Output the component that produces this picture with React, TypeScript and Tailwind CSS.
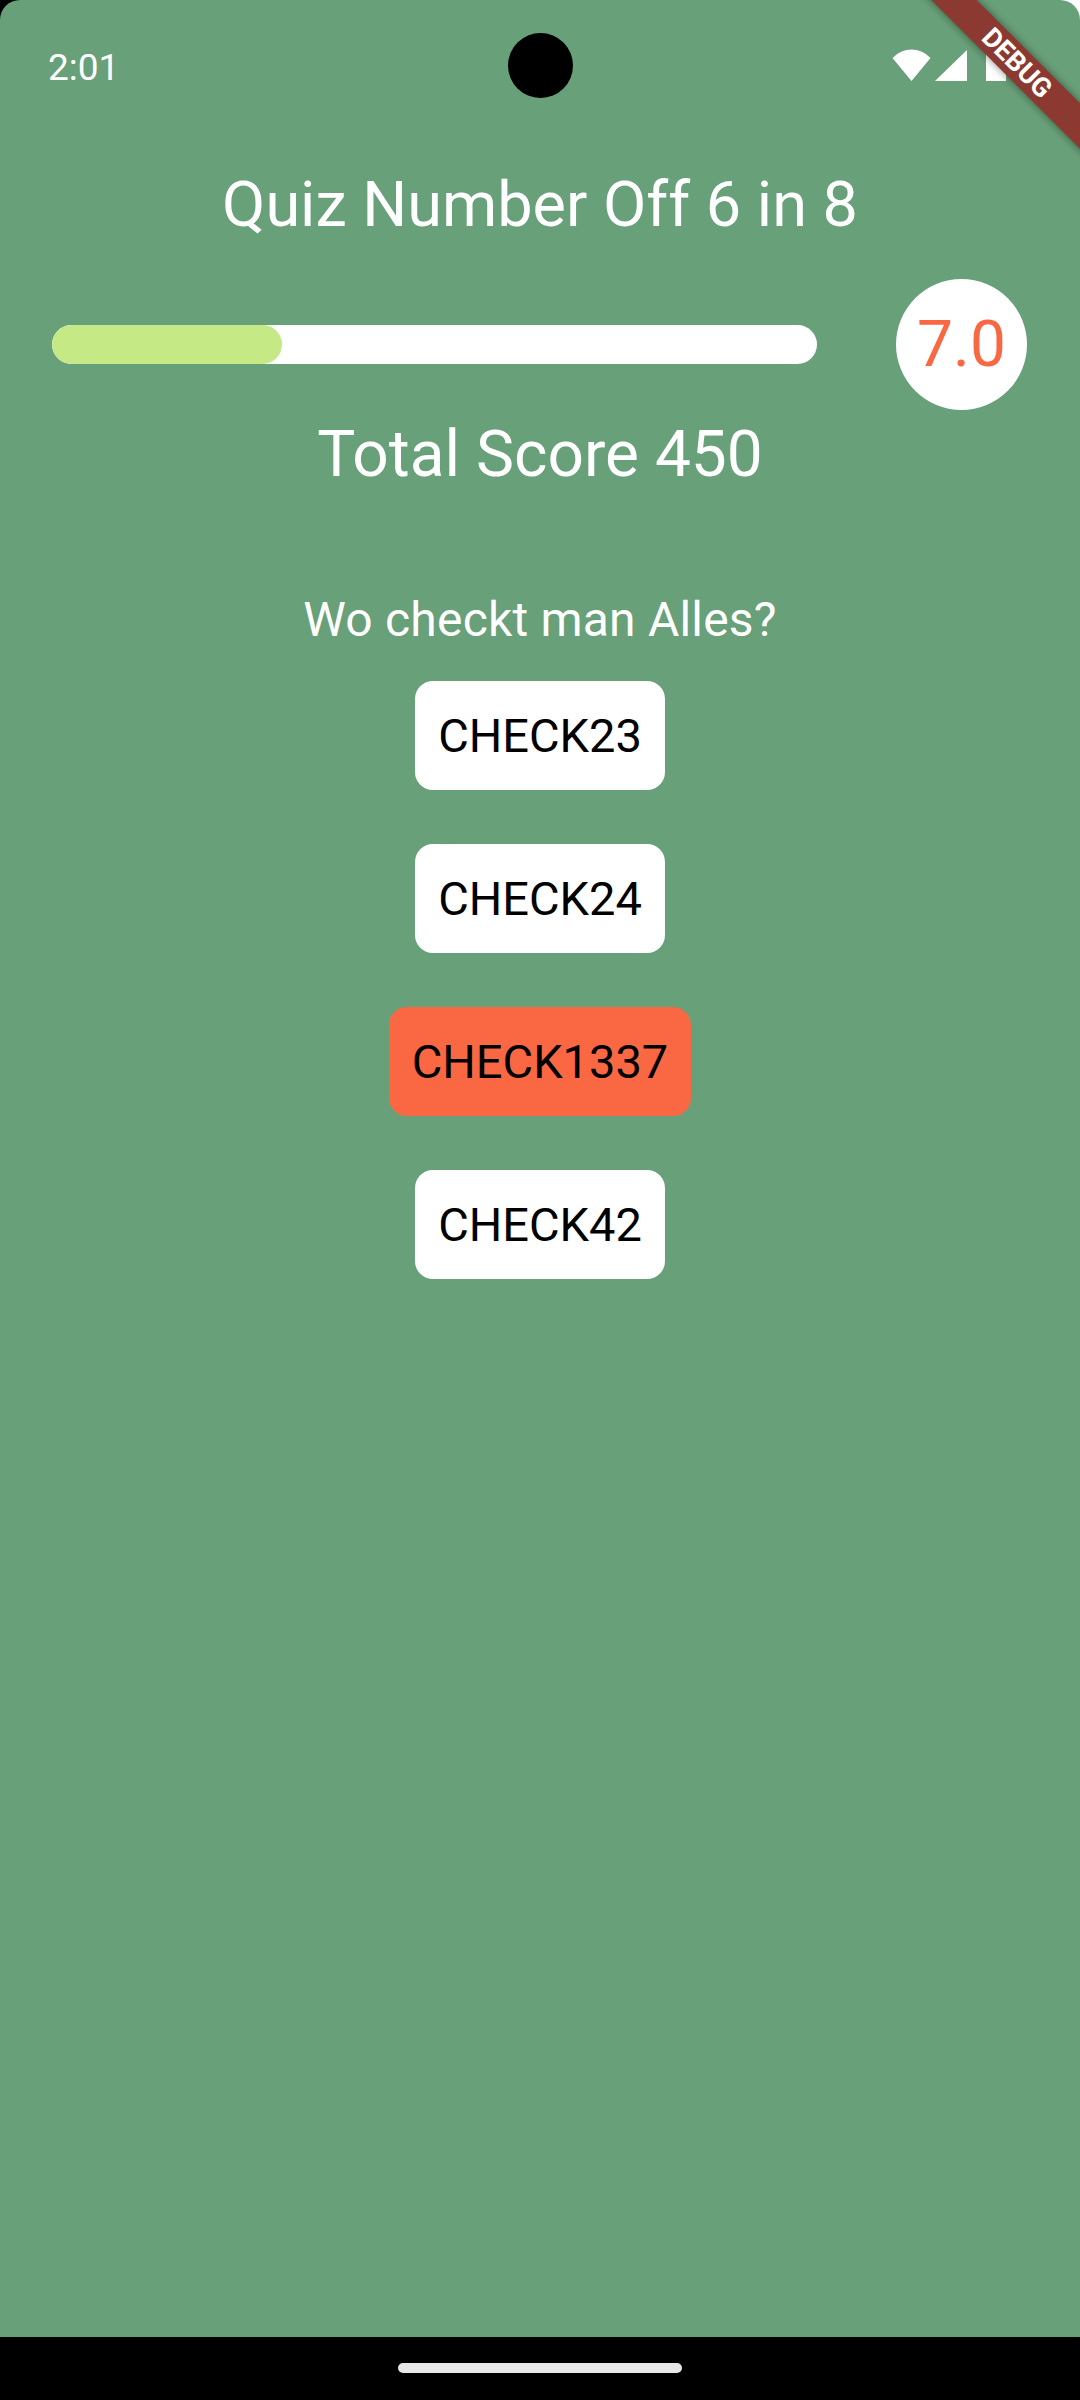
import React from 'react';

// Quiz screen (Flutter debug build on Android), 1080x2400
const answers = [
  { label: 'CHECK23', wrong: false },
  { label: 'CHECK24', wrong: false },
  { label: 'CHECK1337', wrong: true },
  { label: 'CHECK42', wrong: false },
];

const font = { fontFamily: 'Roboto, "Noto Sans", sans-serif' };

const StatusIcons = () => (
  <div className="flex items-end mb-[8px] gap-[4px]">
    {/* wifi */}
    <svg width="39" height="32" viewBox="0 0 39 32">
      <path d="M19.5 32 L0.5 9 A25.6 25.6 0 0 1 38.5 9 Z" fill="white" />
    </svg>
    {/* signal */}
    <svg width="32" height="31" viewBox="0 0 32 31">
      <path d="M0 31 L32 31 L32 0 Z" fill="white" />
    </svg>
    {/* battery */}
    <svg width="20" height="32" viewBox="0 0 20 32" className="ml-[15px]">
      <path d="M6 0 H14 V3 H20 V32 H0 V3 H6 Z" fill="white" />
    </svg>
  </div>
);

export default function App() {
  return (
    <div
      className="relative w-[1080px] h-[2400px] overflow-hidden flex flex-col bg-[linear-gradient(to_right,black_50%,white_50%)]"
      style={font}
    >
      <div className="flex-1 flex flex-col bg-[#68a079] rounded-t-[20px]">
        {/* status bar */}
        <div className="mt-[47px] h-[42px] flex items-end justify-between pl-[48px] pr-[74px]">
          <span className="text-[37px] leading-[42px] text-white">2:01</span>
          <StatusIcons />
        </div>

        <h1 className="mt-[79px] text-center text-white text-[63px] leading-[74px] font-normal">
          Quiz Number Off 6 in 8
        </h1>

        <div className="mt-[37px] flex items-center gap-[79px] pl-[52px] pr-[53px]">
          <div className="flex-1 h-[39px] rounded-full bg-white overflow-hidden">
            <div className="h-full w-[30%] rounded-full bg-[#c4e985]" />
          </div>
          <div className="w-[131px] h-[131px] rounded-full bg-white flex items-center justify-center">
            <span className="text-[64px] leading-[74px] text-[#f96743]">7.0</span>
          </div>
        </div>

        <div className="mt-[8px] text-center text-white text-[64px] leading-[74px]">
          Total Score 450
        </div>

        <div className="mt-[100px] text-center text-white text-[48px] leading-[55px] tracking-[0.2px]">
          Wo checkt man Alles?
        </div>

        <div className="mt-[34px] flex flex-col items-center gap-[54px]">
          {answers.map((a) => (
            <button
              key={a.label}
              className={
                'h-[109px] px-[23px] rounded-[18px] flex items-center text-[47px] leading-[55px] text-black ' +
                (a.wrong ? 'bg-[#f96743]' : 'bg-white')
              }
            >
              {a.label}
            </button>
          ))}
        </div>
      </div>

      {/* navigation bar */}
      <div className="h-[63px] bg-black flex justify-center pt-[26px]">
        <div className="w-[284px] h-[10px] rounded-full bg-[#e8e8e8]" />
      </div>

      {/* camera cutout */}
      <div className="absolute left-[508px] top-[33px] w-[65px] h-[65px] rounded-full bg-black" />

      {/* debug banner */}
      <div className="absolute left-[887px] top-[47px] w-[260px] h-[32px] rotate-45 bg-[#8c3a31] shadow-[0_0_8px_rgba(0,0,0,0.45)] flex items-center justify-center">
        <span className="text-white text-[27px] leading-none font-bold">DEBUG</span>
      </div>
    </div>
  );
}
